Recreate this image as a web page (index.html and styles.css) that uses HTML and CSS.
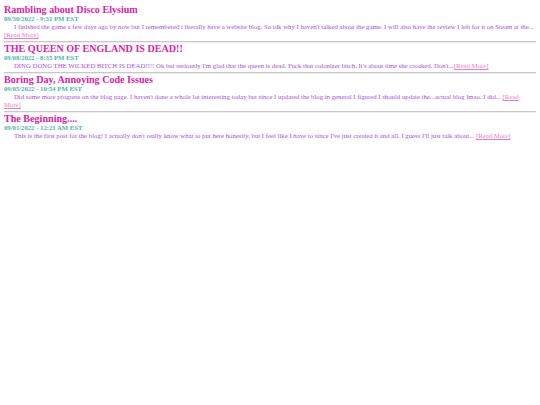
FILE: index.html
```html
<!DOCTYPE html>
<html>
<head>
<meta charset="utf-8">
<link rel="stylesheet" href="styles.css">
</head>
<body>
<div class="post">
  <div class="title">Rambling about Disco Elysium</div>
  <div class="date">09/30/2022 - 9:31 PM EST</div>
  <div class="body">I finished the game a few days ago by now but I remembered i literally have a website blog. So idk why I haven't talked about the game. I will also have the review I left for it on Steam at the... <a href="#" class="more">[Read More]</a></div>
</div>
<hr>
<div class="post">
  <div class="title">THE QUEEN OF ENGLAND IS DEAD!!</div>
  <div class="date">09/08/2022 - 8:35 PM EST</div>
  <div class="body">DING DONG THE WICKED BITCH IS DEAD!!!! Ok but seriously I'm glad that the queen is dead. Fuck that colonizer bitch. It's about time she croaked. Don't...<a href="#" class="more">[Read More]</a></div>
</div>
<hr>
<div class="post">
  <div class="title">Boring Day, Annoying Code Issues</div>
  <div class="date">09/05/2022 - 10:54 PM EST</div>
  <div class="body">Did some more progress on the blog page. I haven't done a whole lot interesting today but since I updated the blog in general I figured I should update the...actual blog lmao. I did... <a href="#" class="more">[Read More]</a></div>
</div>
<hr>
<div class="post">
  <div class="title">The Beginning....</div>
  <div class="date">09/01/2022 - 12:21 AM EST</div>
  <div class="body">This is the first post for the blog! I actually don't really know what to put here honestly, but I feel like I have to since I've just created it and all. I guess I'll just talk about... <a href="#" class="more">[Read More]</a></div>
</div>
</body>
</html>
```
FILE: styles.css
```css
body {
  margin: 3.5px 4px;
  font-family: "Liberation Serif", "Times New Roman", serif;
  background: #ffffff;
}
.title {
  font-size: 10.1px;
  font-weight: bold;
  color: #db24a4;
  line-height: 11px;
}
.date {
  font-size: 6.7px;
  font-weight: bold;
  color: #4db5ad;
  line-height: 8px;
}
.body {
  font-size: 6.75px;
  color: #aa4ddd;
  line-height: 8px;
  text-indent: 10px;
}
.more {
  color: #f07cc0;
}
hr {
  margin: 2px 0 0;
  border: none;
  border-top: 1px solid #c8c8c8;
  border-bottom: 1px solid #eeeeee;
}
```
